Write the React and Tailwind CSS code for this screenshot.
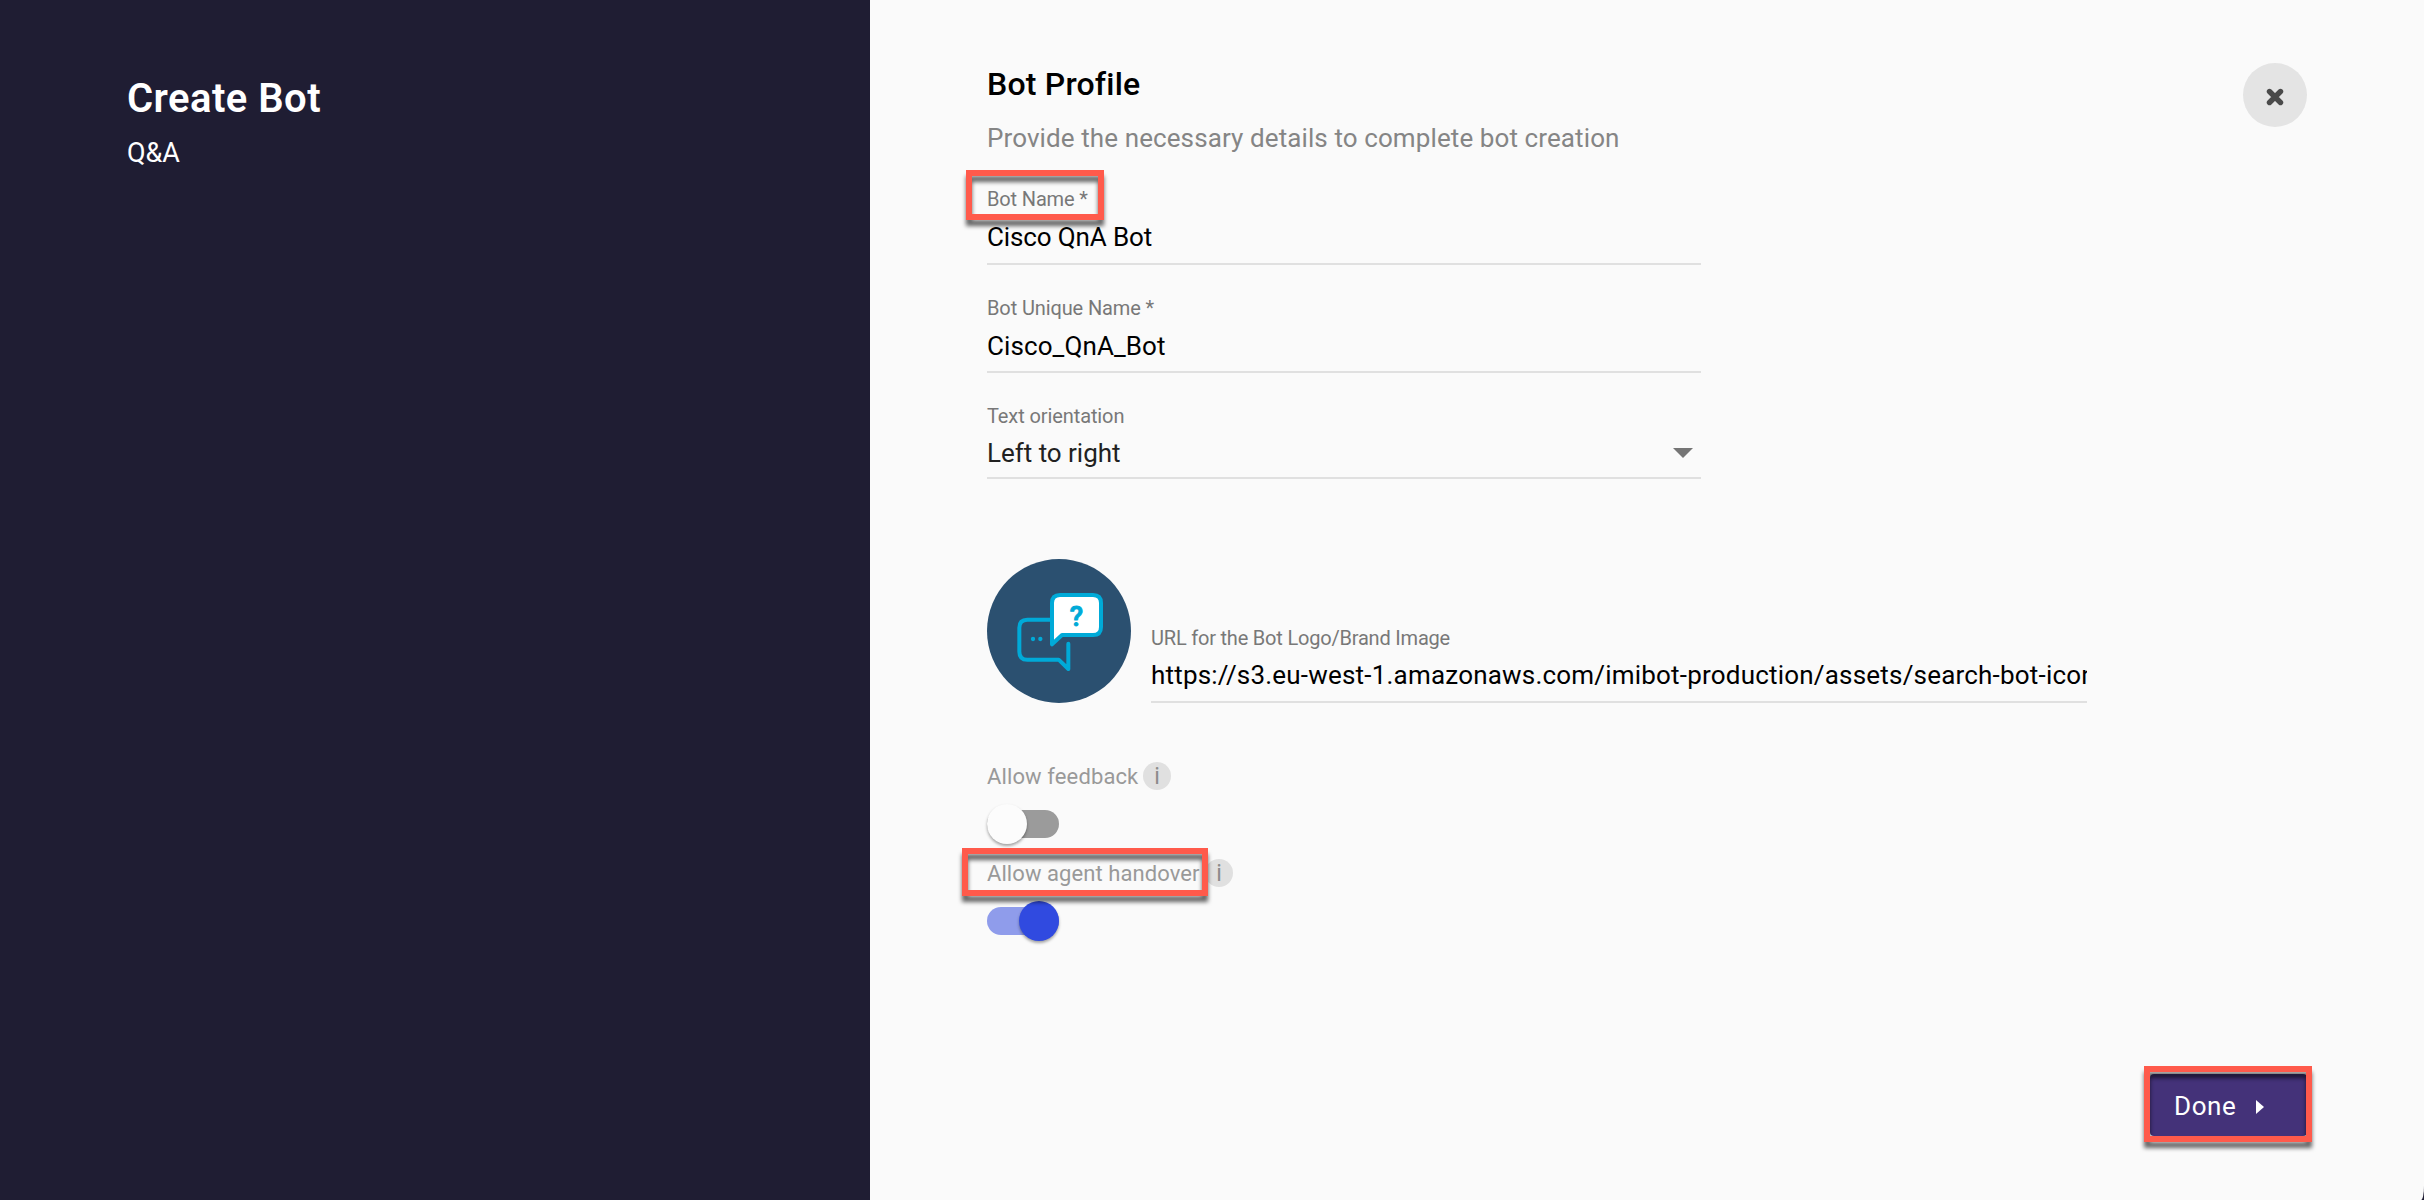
function Highlight({ className }) {
  return (
    <span
      className={`pointer-events-none absolute border-6 border-[#ff5a4b] [filter:drop-shadow(0_6px_2px_rgba(0,0,0,0.6))] ${className}`}
    />
  );
}

function Info() {
  return (
    <span className="flex size-7 shrink-0 items-center justify-center rounded-full bg-[#e0e0e0] pt-px text-[23px] leading-7 text-[#8c8c8c]">
      i
    </span>
  );
}

function Toggle({ on }) {
  return (
    <div className="flex h-10 w-18 items-center">
      <div
        className={`flex h-7 w-18 items-center rounded-full ${
          on ? "justify-end bg-[#8f9ceb]" : "justify-start bg-[#9b9b9b]"
        }`}
      >
        <div
          className={`size-10 shrink-0 rounded-full shadow-[0_2px_3px_rgba(0,0,0,0.35)] ${
            on ? "bg-[#304ae0]" : "bg-[#fcfcfc]"
          }`}
        />
      </div>
    </div>
  );
}

function BotLogo() {
  return (
    <svg
      viewBox="21 27 432 432"
      className="size-36 shrink-0"
      fill="none"
      stroke="#00aad8"
      strokeWidth="12"
      strokeLinecap="round"
      strokeLinejoin="round"
    >
      <circle cx="237" cy="243" r="216" fill="#2b5070" stroke="none" />
      <path d="M212 209H142Q118 209 118 233V305Q118 329 142 329H236L265 357V281" />
      <path
        d="M216 283V159Q216 135 240 135H339Q363 135 363 159V231Q363 255 339 255H246Z"
        fill="#ffffff"
      />
      <g fill="#00aad8" stroke="none">
        <circle cx="159" cy="267" r="6.5" />
        <circle cx="181" cy="267" r="6.5" />
      </g>
      <text
        x="289"
        y="227"
        textAnchor="middle"
        fontSize="82"
        fontWeight="500"
        fill="#00aad8"
        strokeWidth="3"
      >
        ?
      </text>
    </svg>
  );
}

export default function App() {
  return (
    <div className="flex h-[1200px] w-[2424px] overflow-hidden bg-[#1f1d33] font-['Roboto',sans-serif]">
      <aside className="w-[870px] shrink-0 pt-[75px] pl-[127px] text-white">
        <h1 className="text-[40px] leading-12 font-semibold tracking-[0.45px]">Create Bot</h1>
        <p className="mt-3.5 text-[27px] leading-8">Q&amp;A</p>
      </aside>

      <main className="flex grow flex-col bg-[#fafafa] pr-[117px] pb-16 pl-[117px] [border-bottom-right-radius:3px_14px]">
        <header className="flex items-start justify-between">
          <div className="pt-16">
            <h2 className="text-[32px] leading-10 font-medium tracking-[0.2px] text-black">
              Bot Profile
            </h2>
            <p className="mt-[18px] text-[26px] leading-8 tracking-[0.1px] text-[#858585]">
              Provide the necessary details to complete bot creation
            </p>
          </div>
          <button className="mt-[63px] flex size-16 items-center justify-center rounded-full bg-[#e4e4e4] pt-[3px]">
            <svg viewBox="0 0 18 18" className="size-[18px]">
              <path d="M3.5 3.5 14.5 14.5M14.5 3.5 3.5 14.5" stroke="#4a4a4a" strokeWidth="5.4" strokeLinecap="round" />
            </svg>
          </button>
        </header>

        <div className="relative mt-[33px] w-[714px] border-b-2 border-[#e0e0e0] pb-2.5">
          <p className="text-xl leading-6 tracking-[-0.15px] text-[#787878]">Bot Name *</p>
          <p className="mt-2.5 text-[26px] leading-8 tracking-[-0.12px] text-black">Cisco QnA Bot</p>
          <Highlight className="-top-[17px] -left-[21px] h-[50px] w-[138px]" />
        </div>

        <div className="mt-[31px] w-[714px] border-b-2 border-[#e0e0e0] pb-[9px]">
          <p className="text-xl leading-6 tracking-[-0.12px] text-[#787878]">Bot Unique Name *</p>
          <p className="mt-2.5 text-[26px] leading-8 tracking-[0.1px] text-black">Cisco_QnA_Bot</p>
        </div>

        <div className="mt-[31px] w-[714px] border-b-2 border-[#e0e0e0] pb-2">
          <p className="text-xl leading-6 tracking-[-0.1px] text-[#787878]">Text orientation</p>
          <div className="mt-[9px] flex items-center justify-between pr-2">
            <p className="text-[26px] leading-8 tracking-[-0.03px] text-[#212121]">Left to right</p>
            <svg viewBox="0 0 20 10" className="h-2.5 w-5">
              <path d="M0 0H20L10 10Z" fill="#757575" />
            </svg>
          </div>
        </div>

        <div className="mt-20 flex gap-5">
          <BotLogo />
          <div className="flex w-[936px] flex-col justify-end border-b-2 border-[#e0e0e0] pb-2.5">
            <p className="text-xl leading-6 tracking-[-0.2px] text-[#787878]">
              URL for the Bot Logo/Brand Image
            </p>
            <p className="mt-[9px] overflow-hidden text-[26px] leading-8 tracking-[0.2px] whitespace-nowrap text-black">
              https://s3.eu-west-1.amazonaws.com/imibot-production/assets/search-bot-icon
            </p>
          </div>
        </div>

        <div className="mt-[59px] flex">
          <p className="w-[156px] pt-px text-[22px] leading-7 tracking-[0.12px] whitespace-nowrap text-[#999]">
            Allow feedback
          </p>
          <Info />
        </div>
        <div className="mt-[13px]">
          <Toggle />
        </div>

        <div className="relative mt-[15px] flex">
          <p className="w-[218px] pt-px text-[22px] leading-7 tracking-[0.08px] whitespace-nowrap text-[#999]">
            Allow agent handover
          </p>
          <Info />
          <Highlight className="-top-[11px] -left-[25px] h-12 w-[246px]" />
        </div>
        <div className="mt-[13px]">
          <Toggle on />
        </div>

        <footer className="mt-auto flex justify-end">
          <button className="relative flex h-[62px] w-[157px] items-center rounded bg-[#443279] pt-1 pl-6 text-white">
            <span className="-mt-0.5 text-[26px] leading-8 tracking-[0.6px]">Done</span>
            <svg viewBox="0 0 8 14" className="ml-5 h-3.5 w-2">
              <path d="M0 0 8 7 0 14Z" fill="#fff" />
            </svg>
            <Highlight className="-top-2 -left-1.5 h-[76px] w-[168px]" />
          </button>
        </footer>
      </main>
    </div>
  );
}
